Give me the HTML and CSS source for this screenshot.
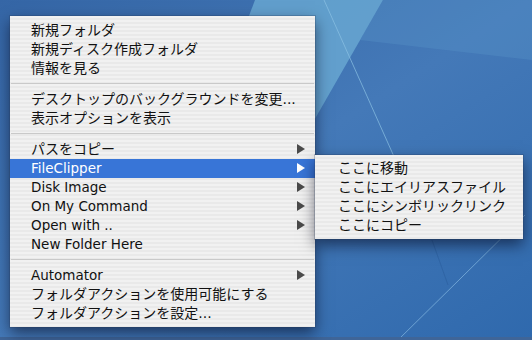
FILE: index.html
```html
<!DOCTYPE html>
<html lang="ja">
<head>
  <meta charset="UTF-8">
  <title>Finder context menu</title>
  <link rel="stylesheet" href="styles.css">
</head>
<body>
  <div class="desktop">
    <svg class="wallpaper" width="532" height="340" viewBox="0 0 532 340">
      <defs>
        <linearGradient id="bg" x1="0" y1="0" x2="1" y2="1">
          <stop offset="0" stop-color="#3566a6"/>
          <stop offset="0.5" stop-color="#4479b8"/>
          <stop offset="1" stop-color="#2f69ad"/>
        </linearGradient>
      </defs>
      <rect width="532" height="340" fill="url(#bg)"/>
      <polygon points="255,0 383,0 300,145 200,145" fill="#6aaad3" opacity="0.8"/>
      <polygon points="383,0 532,0 532,60 360,40" fill="#5a95c8" opacity="0.35"/>
      <line x1="324" y1="0" x2="400" y2="170" stroke="#8cc2e4" stroke-width="1" opacity="0.7"/>
      <line x1="525" y1="215" x2="398" y2="340" stroke="#7cb0dc" stroke-width="1" opacity="0.8"/>
      <line x1="432" y1="240" x2="448" y2="285" stroke="#2c5f9e" stroke-width="1" opacity="0.6"/>
      <rect y="337" width="532" height="3" fill="#3f6598"/>
    </svg>

    <div class="menus">
      <ul class="menu main">
        <li>新規フォルダ</li>
        <li>新規ディスク作成フォルダ</li>
        <li>情報を見る</li>
        <li class="sep"></li>
        <li>デスクトップのバックグラウンドを変更...</li>
        <li>表示オプションを表示</li>
        <li class="sep"></li>
        <li class="sub">パスをコピー</li>
        <li class="sub latin active">FileClipper</li>
        <li class="sub latin">Disk Image</li>
        <li class="sub latin">On My Command</li>
        <li class="sub latin">Open with ..</li>
        <li class="latin">New Folder Here</li>
        <li class="sep"></li>
        <li class="sub latin">Automator</li>
        <li>フォルダアクションを使用可能にする</li>
        <li>フォルダアクションを設定...</li>
      </ul>

      <ul class="menu submenu">
        <li>ここに移動</li>
        <li>ここにエイリアスファイル</li>
        <li>ここにシンボリックリンク</li>
        <li>ここにコピー</li>
      </ul>
    </div>
  </div>
</body>
</html>
```

FILE: styles.css
```css
body {
  margin: 0;
  width: 532px;
  height: 340px;
  overflow: hidden;
}

.desktop {
  position: relative;
  width: 532px;
  height: 340px;
}

.wallpaper {
  position: absolute;
  top: 0;
  left: 0;
}

.menus {
  position: relative;
  display: flex;
  align-items: flex-start;
  padding: 16px 0 0 10px;
}

.menu {
  list-style: none;
  margin: 0;
  background: repeating-linear-gradient(#f1f1f1 0 2px, #e9e9e9 2px 4px);
  box-shadow: 0 0 0 1px rgba(40, 60, 90, 0.25), 0 6px 14px rgba(0, 0, 20, 0.55);
  font-family: "DejaVu Sans", "Noto Sans CJK JP", sans-serif;
  font-size: 14px;
  color: #111;
}

.main {
  width: 305px;
  padding: 5px 0 4px;
}

.submenu {
  width: 208px;
  margin-top: 139px;
  padding: 4px 0;
  position: relative;
  z-index: 2;
}

.menu li {
  height: 19px;
  line-height: 19px;
  padding-left: 21px;
  position: relative;
  white-space: nowrap;
}

.submenu li {
  padding-left: 23px;
}

.menu li.latin {
  font-size: 13.5px;
}

.menu li.sep {
  height: 12px;
  padding: 0;
}

.menu li.sep::before {
  content: "";
  position: absolute;
  left: 1px;
  right: 1px;
  top: 5px;
  height: 1px;
  background: #c9c9c9;
}

.menu li.sub::after {
  content: "";
  position: absolute;
  left: 287px;
  top: 4px;
  border-left: 8px solid #4a4a4a;
  border-top: 5.5px solid transparent;
  border-bottom: 5.5px solid transparent;
}

.menu li.active {
  background: #3875d7;
  color: #fff;
}

.menu li.active::after {
  border-left-color: #fff;
}
```
